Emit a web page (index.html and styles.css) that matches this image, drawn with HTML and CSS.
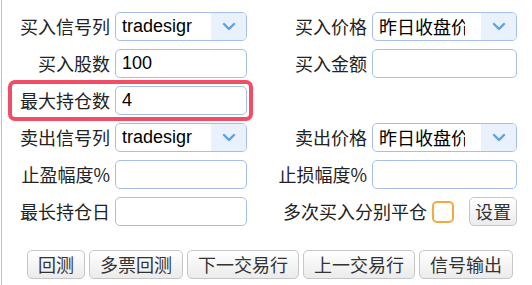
FILE: index.html
```html
<!DOCTYPE html>
<html lang="zh-CN">
<head>
  <meta charset="UTF-8">
  <title>回测设置</title>
  <link rel="stylesheet" href="styles.css">
</head>
<body>
  <div class="panel">
    <div class="form-grid">
      <label class="lbl">买入信号列</label>
      <div class="select"><span class="select-text">tradesigr</span><span class="select-arrow"><svg width="14" height="9" viewBox="0 0 14 9"><path d="M2 2 L7 7 L12 2" fill="none" stroke="#5aa2e4" stroke-width="2.4" stroke-linecap="round" stroke-linejoin="round"/></svg></span></div>
      <label class="lbl">买入价格</label>
      <div class="select"><span class="select-text cjk">昨日收盘价</span><span class="select-arrow"><svg width="14" height="9" viewBox="0 0 14 9"><path d="M2 2 L7 7 L12 2" fill="none" stroke="#5aa2e4" stroke-width="2.4" stroke-linecap="round" stroke-linejoin="round"/></svg></span></div>

      <label class="lbl">买入股数</label>
      <input class="txt" type="text" value="100">
      <label class="lbl">买入金额</label>
      <input class="txt" type="text" value="">

      <label class="lbl">最大持仓数</label>
      <input class="txt" type="text" value="4">
      <div class="empty"></div>
      <div class="highlight"></div>

      <label class="lbl">卖出信号列</label>
      <div class="select"><span class="select-text">tradesigr</span><span class="select-arrow"><svg width="14" height="9" viewBox="0 0 14 9"><path d="M2 2 L7 7 L12 2" fill="none" stroke="#5aa2e4" stroke-width="2.4" stroke-linecap="round" stroke-linejoin="round"/></svg></span></div>
      <label class="lbl">卖出价格</label>
      <div class="select"><span class="select-text cjk">昨日收盘价</span><span class="select-arrow"><svg width="14" height="9" viewBox="0 0 14 9"><path d="M2 2 L7 7 L12 2" fill="none" stroke="#5aa2e4" stroke-width="2.4" stroke-linecap="round" stroke-linejoin="round"/></svg></span></div>

      <label class="lbl">止盈幅度%</label>
      <input class="txt" type="text" value="">
      <label class="lbl">止损幅度%</label>
      <input class="txt" type="text" value="">

      <label class="lbl">最长持仓日</label>
      <input class="txt" type="text" value="">
      <div class="check-cell">
        <span class="lbl">多次买入分别平仓</span>
        <span class="checkbox"></span>
        <button class="btn btn-set">设置</button>
      </div>
    </div>

    <div class="actions">
      <button class="btn">回测</button>
      <button class="btn">多票回测</button>
      <button class="btn">下一交易行</button>
      <button class="btn">上一交易行</button>
      <button class="btn">信号输出</button>
    </div>
  </div>
</body>
</html>
```

FILE: styles.css
```css
/* Page base */
body {
  margin: 0;
  padding: 0;
  background: #fff;
  font-family: "Noto Sans CJK SC", "Liberation Sans", sans-serif;
  font-size: 18px;
  color: #222;
}
/* Panel with thin blue rule on the left */
.panel {
  margin-left: 1px;
  border-left: 1px solid #a9c3ec;
  height: 285px;
  box-sizing: border-box;
  padding: 12px 0 0 15px;
}
.form-grid {
  position: relative;
  display: grid;
  grid-template-columns: 93px 132px 115px 145px;
  grid-auto-rows: 29px;
  column-gap: 5px;
  row-gap: 8px;
}
.lbl {
  display: flex;
  align-items: center;
  justify-content: flex-end;
  white-space: nowrap;
  line-height: 29px;
  color: #222;
}
.empty {
  grid-column: 3 / 5;
}
.txt {
  box-sizing: border-box;
  width: 100%;
  height: 29px;
  margin: 0;
  padding: 0 6px;
  border: 1px solid #a5bfe8;
  border-radius: 5px;
  background: #fff;
  font-family: "Liberation Sans", "Noto Sans CJK SC", sans-serif;
  font-size: 18px;
  color: #000;
  outline: none;
}
/* Fake select box */
.select {
  box-sizing: border-box;
  display: flex;
  justify-content: space-between;
  height: 29px;
  border: 1px solid #a5bfe8;
  border-radius: 5px;
  overflow: hidden;
  background: #fff;
}
.select-text {
  box-sizing: border-box;
  width: 92px;
  padding-left: 6px;
  line-height: 27px;
  overflow: hidden;
  white-space: nowrap;
  font-family: "Liberation Sans", "Noto Sans CJK SC", sans-serif;
  color: #000;
}
.select-text.cjk {
  font-family: "Noto Sans CJK SC", sans-serif;
}
.select-arrow {
  width: 35px;
  display: flex;
  align-items: center;
  justify-content: center;
  background: #e8f1fc;
}
/* Red annotation box around the 最大持仓数 row */
.highlight {
  position: absolute;
  grid-row: 3 / 4;
  grid-column: 1 / 3;
  top: -6px;
  bottom: -6px;
  left: -9px;
  right: -6px;
  border: 4px solid #f14d67;
  border-radius: 7px;
  pointer-events: none;
}
.check-cell {
  grid-column: 3 / 5;
  display: flex;
  align-items: center;
  justify-content: flex-end;
}
.checkbox {
  box-sizing: border-box;
  width: 22px;
  height: 22px;
  margin-left: 5px;
  border: 2px solid #f7a940;
  border-radius: 5px;
  background: #fff;
}
.btn {
  box-sizing: border-box;
  height: 29px;
  margin: 0;
  padding: 0 10px;
  border: 1px solid #c6c6c6;
  border-radius: 5px;
  background: linear-gradient(#ffffff, #ebebeb);
  font-family: "Noto Sans CJK SC", sans-serif;
  font-size: 18px;
  line-height: 27px;
  color: #333;
  cursor: pointer;
}
.btn-set {
  margin-left: 15px;
  padding: 0 5px;
}
.actions {
  display: flex;
  gap: 4px;
  margin-top: 24px;
  padding-left: 10px;
}
```
